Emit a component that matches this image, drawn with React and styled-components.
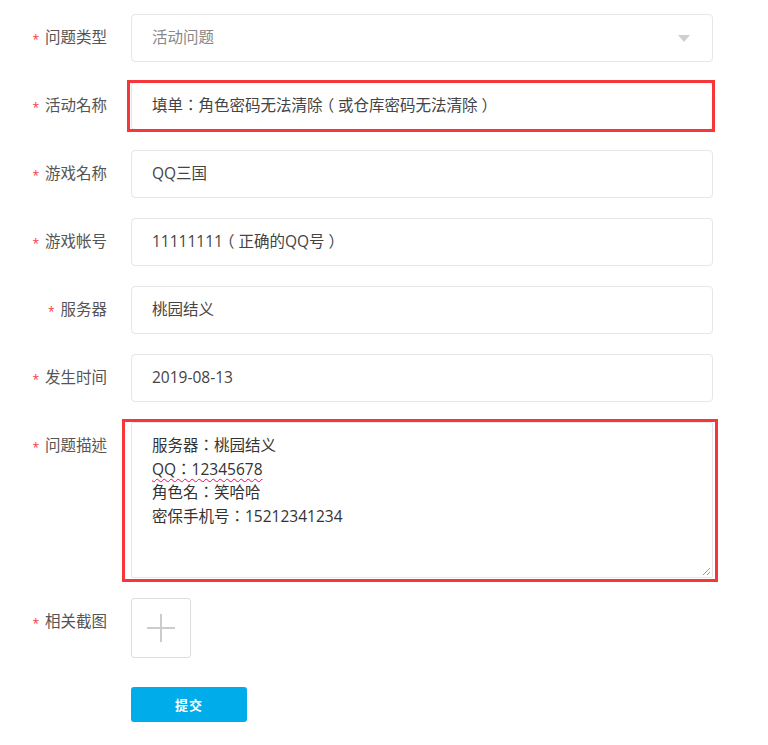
import styled, { createGlobalStyle } from "styled-components"

const GlobalStyle = createGlobalStyle`
  body {
    margin: 0;
    background: #fff;
    font-family: "Open Sans", "Noto Sans CJK TC", "Noto Sans CJK SC", sans-serif;
  }
`

const Form = styled.form`
  display: grid;
  grid-template-columns: 107px 582px;
  column-gap: 24px;
  row-gap: 20px;
  padding-top: 14px;
  width: 768px;
`

const Label = styled.label`
  display: flex;
  justify-content: flex-end;
  align-items: flex-start;
  line-height: 46px;
  font-size: 15.5px;
  color: #555;
  white-space: nowrap;
`

const Star = styled.span`
  color: #f2374a;
  font-size: 12px;
  line-height: 1;
  margin: 20px 6px 0 0;
`

const Field = styled.div`
  position: relative;
  ${(props) =>
    props.$mark &&
    `
    &::after {
      content: "";
      position: absolute;
      top: ${props.$mark[0]}px;
      right: ${props.$mark[1]}px;
      bottom: ${props.$mark[2]}px;
      left: ${props.$mark[3]}px;
      border: 3px solid #f5373c;
      pointer-events: none;
    }
  `}
`

const Box = styled.div`
  box-sizing: border-box;
  height: 48px;
  border: 1px solid #e6e6e6;
  border-radius: 4px;
  padding: 0 20px 3px;
  display: flex;
  align-items: center;
  justify-content: space-between;
  font-size: 15.5px;
  color: ${(props) => props.$color ?? "#444"};
  background: #fff;
`

const Value = styled.span`
  white-space: nowrap;
`

// full-width bracket, centred in its em box
const Paren = styled.span`
  display: inline-block;
  width: 1em;
  text-align: center;
  font-feature-settings: "halt";
`

const Arrow = styled.span`
  width: 0;
  height: 0;
  border-left: 6px solid transparent;
  border-right: 6px solid transparent;
  border-top: 7px solid #cfcfcf;
  margin: 3px 2px 0 0;
`

const Area = styled.div`
  position: relative;
  box-sizing: border-box;
  height: 156px;
  border: 1px solid #e6e6e6;
  border-radius: 2px;
  padding: 11px 20px;
  font-size: 15.5px;
  line-height: 23.5px;
  color: #333;
  white-space: pre-line;
`

const Squiggle = styled.span`
  text-decoration: underline wavy #f06;
  text-decoration-thickness: 1px;
  text-underline-offset: 3px;
`

const Grip = styled.svg`
  position: absolute;
  right: 1px;
  bottom: 1px;
`

const Upload = styled.div`
  box-sizing: border-box;
  width: 60px;
  height: 60px;
  border: 1px solid #dedede;
  border-radius: 3px;
  display: flex;
  align-items: center;
  justify-content: center;
`

const Submit = styled.button`
  grid-column: 2;
  margin-top: 9px;
  width: 116px;
  height: 35px;
  border: none;
  border-radius: 3px;
  background: #00adea;
  color: #fff;
  font-family: inherit;
  font-size: 13px;
  font-weight: bold;
  letter-spacing: 1px;
`

function Row({ label, children }) {
  return (
    <>
      <Label>
        <Star>*</Star>
        {label}
      </Label>
      {children}
    </>
  )
}

export default function App() {
  return (
    <>
      <GlobalStyle />
      <Form>
        <Row label="问题类型">
          <Box $color="#888">
            活动问题
            <Arrow />
          </Box>
        </Row>
        <Row label="活动名称">
          <Field $mark={[-2, -2, -2, -4]}>
            <Box>
              <Value>
                填单：角色密码无法清除<Paren>（</Paren>或仓库密码无法清除<Paren>）</Paren>
              </Value>
            </Box>
          </Field>
        </Row>
        <Row label="游戏名称">
          <Box>QQ三国</Box>
        </Row>
        <Row label="游戏帐号">
          <Box>
            <Value>
              11111111<Paren>（</Paren>正确的QQ号<Paren>）</Paren>
            </Value>
          </Box>
        </Row>
        <Row label="服务器">
          <Box>桃园结义</Box>
        </Row>
        <Row label="发生时间">
          <Box>2019-08-13</Box>
        </Row>
        <Row label="问题描述">
          <Field $mark={[-3, -5, -4, -9]}>
            <Area>
              服务器：桃园结义
              {"\n"}
              <Squiggle>QQ：12345678</Squiggle>
              {"\n"}
              角色名：笑哈哈
              {"\n"}
              密保手机号：15212341234
              <Grip width="10" height="10" viewBox="0 0 10 10">
                <path d="M9 2 L2 9 M9 6 L6 9" stroke="#999" strokeWidth="1" />
              </Grip>
            </Area>
          </Field>
        </Row>
        <Row label="相关截图">
          <div>
            <Upload>
              <svg width="30" height="30" viewBox="0 0 30 30">
                <path d="M15 1 V29 M1 15 H29" stroke="#cccccc" strokeWidth="2" />
              </svg>
            </Upload>
          </div>
        </Row>
        <Submit type="button">提交</Submit>
      </Form>
    </>
  )
}
